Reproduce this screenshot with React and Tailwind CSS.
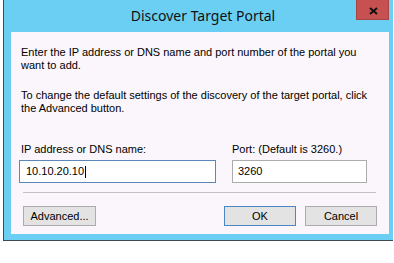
export default function App() {
  const body = { fontFamily: '"Liberation Sans", Arial, sans-serif' };
  const title = { fontFamily: '"Noto Sans", "Open Sans", sans-serif' };

  return (
    <div className="w-[394px] h-[263px] bg-white">
      {/* Window frame */}
      <div className="ml-[3px] w-[390px] bg-[#6bcff4] border-l border-b border-[#3c4a52] pl-[7px] pr-[4px] pb-[6px]">
        {/* Title bar */}
        <div className="relative h-[32px] flex items-center justify-center">
          <span style={title} className="text-[14px] text-[#111] leading-none -mt-[1px] pl-[6px]">
            Discover Target Portal
          </span>
          <div className="absolute top-0 right-[0px] w-[33px] h-[20px] bg-[#c75050] border border-t-0 border-[#a84444] flex items-center justify-center">
            <svg width="9" height="8" viewBox="0 0 9 8" className="mt-[3px] ml-[2px]">
              <path d="M1 1 L8 7 M8 1 L1 7" stroke="#111" strokeWidth="2" />
            </svg>
          </div>
        </div>

        {/* Content */}
        <div style={body} className="w-[378px] h-[202px] bg-[#faf6fb] text-[11px] leading-[13px] text-black flex flex-col">
          <p className="pl-[10px] pt-[14px]">
            Enter the IP address or DNS name and port number of the portal you
            <br />
            want to add.
          </p>
          <p className="pl-[10px] mt-[17px]">
            To change the default settings of the discovery of the target portal, click
            <br />
            the Advanced button.
          </p>

          {/* Fields */}
          <div className="flex pl-[8px] mt-[28px]">
            <div className="w-[197px] flex flex-col">
              <label className="pl-[2px]">IP address or DNS name:</label>
              <div className="mt-[4px] h-[23px] border border-[#5c88b9] bg-white flex items-center pl-[6px]">
                <span>10.10.20.10</span>
                <span className="w-[1px] h-[12px] bg-black ml-[1px]"></span>
              </div>
            </div>
            <div className="w-[135px] ml-[16px] flex flex-col">
              <label>Port: (Default is 3260.)</label>
              <div className="mt-[4px] h-[23px] border border-[#acacac] bg-white flex items-center pl-[5px]">
                <span>3260</span>
              </div>
            </div>
          </div>

          {/* Separator */}
          <div className="mt-[9px] ml-[12px] mr-[13px] border-t border-[#c4c0c6]"></div>

          {/* Buttons */}
          <div className="flex justify-between pl-[12px] pr-[12px] mt-[13px]">
            <button className="w-[73px] h-[20px] bg-[#e3e3e3] border border-[#acacac] text-[11px] leading-none">
              Advanced...
            </button>
            <div className="flex gap-[9px]">
              <button className="w-[72px] h-[20px] bg-[#e3e3e3] border border-[#4a86c4] text-[11px] leading-none">
                OK
              </button>
              <button className="w-[72px] h-[20px] bg-[#e3e3e3] border border-[#acacac] text-[11px] leading-none">
                Cancel
              </button>
            </div>
          </div>
        </div>
      </div>
    </div>
  );
}
